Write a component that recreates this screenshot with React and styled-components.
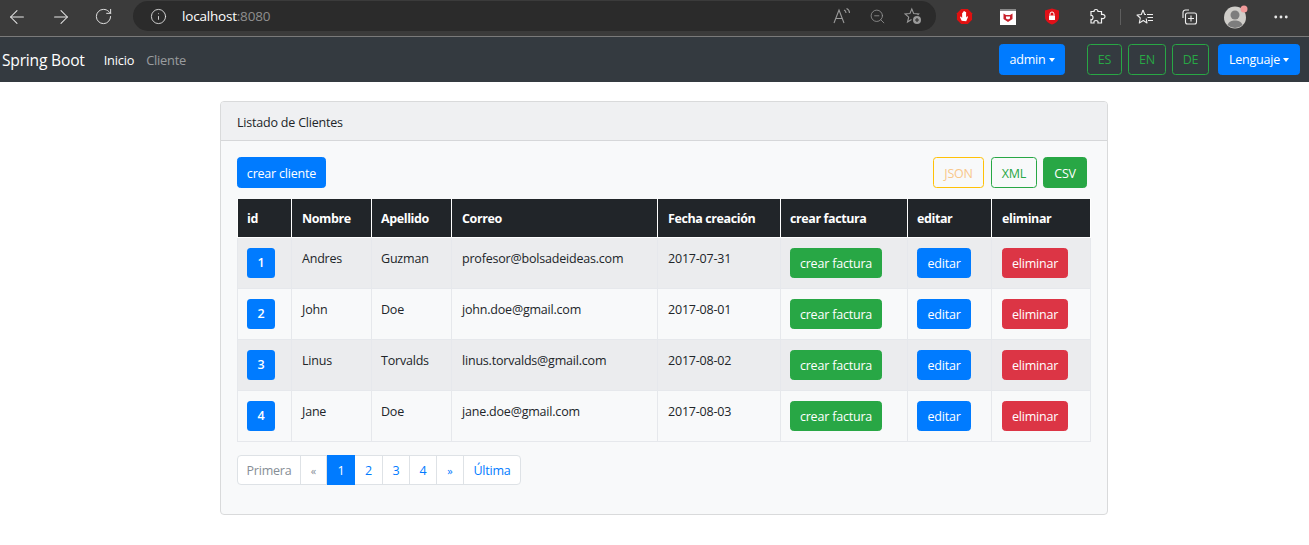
import React from 'react'
import styled, {createGlobalStyle} from 'styled-components'
import {ArrowLeft, ArrowRight, RotateCw, Info, ZoomOut, Ellipsis} from 'lucide-react'

const clientes = [
  {id: 1, nombre: 'Andres', apellido: 'Guzman', correo: 'profesor@bolsadeideas.com', fecha: '2017-07-31'},
  {id: 2, nombre: 'John', apellido: 'Doe', correo: 'john.doe@gmail.com', fecha: '2017-08-01'},
  {id: 3, nombre: 'Linus', apellido: 'Torvalds', correo: 'linus.torvalds@gmail.com', fecha: '2017-08-02'},
  {id: 4, nombre: 'Jane', apellido: 'Doe', correo: 'jane.doe@gmail.com', fecha: '2017-08-03'},
]

const columnas = [
  {titulo: 'id', ancho: 54, pad: 9},
  {titulo: 'Nombre', ancho: 80, pad: 10},
  {titulo: 'Apellido', ancho: 80, pad: 9},
  {titulo: 'Correo', ancho: 206, pad: 10},
  {titulo: 'Fecha creación', ancho: 123, pad: 10},
  {titulo: 'crear factura', ancho: 127, pad: 9},
  {titulo: 'editar', ancho: 84, pad: 9},
  {titulo: 'eliminar', ancho: 99, pad: 10},
]

const paginas = [
  {texto: 'Primera', ancho: 63, disabled: true},
  {texto: '«', ancho: 26, disabled: true, small: true},
  {texto: '1', ancho: 28, active: true},
  {texto: '2', ancho: 28},
  {texto: '3', ancho: 27},
  {texto: '4', ancho: 27},
  {texto: '»', ancho: 27, small: true},
  {texto: 'Última', ancho: 56},
]

const colores = {
  primary: '#007bff',
  success: '#28a745',
  danger: '#dc3545',
  warning: '#ffc107',
}

const GlobalStyle = createGlobalStyle`
  * { box-sizing: border-box; }
  body {
    margin: 0;
    background: #fff;
    color: #212529;
    font-family: "Open Sans", "Noto Sans", sans-serif;
    font-size: 12.5px;
    letter-spacing: -0.2px;
    overflow: hidden;
  }
`

const BrowserBar = styled.div`
  height: 37px;
  background: #3b3b3b;
  border-bottom: 1px solid #7a7a7a;
  display: flex;
  align-items: center;
  color: #e8e8e8;
`

const NavButtons = styled.div`
  display: flex;
  align-items: center;
  gap: 22px;
  padding: 0 0 3px 6px;
  width: 133px;
`

const UrlPill = styled.div`
  width: 803px;
  height: 30px;
  margin-top: -4px;
  border-radius: 15px;
  background: #2b2b2b;
  display: flex;
  align-items: center;
  padding: 0 14px 0 17px;
`

const UrlHost = styled.span`
  margin-left: 15px;
  color: #fff;
  font-size: 13.5px;
  font-weight: 500;
  letter-spacing: -0.2px;
`

const UrlPort = styled.span`
  color: #8f8f8f;
`

const UrlIcons = styled.div`
  margin-left: auto;
  display: flex;
  align-items: center;
  gap: 18px;
  color: #9a9a9a;
`

const Extensions = styled.div`
  flex: 1;
  display: flex;
  align-items: center;
  height: 100%;
  padding-bottom: 3px;
`

const ExtSlot = styled.div`
  width: ${(p) => p.$w}px;
  display: flex;
  justify-content: center;
  align-items: center;
`

const Divider = styled.div`
  width: 1px;
  height: 16px;
  margin-left: 6px;
  background: #5e5e5e;
`

const Navbar = styled.nav`
  height: 45px;
  background: #343a40;
  display: flex;
  align-items: center;
  padding: 0 9px 0 2px;
`

const Brand = styled.a`
  color: #fff;
  font-size: 15.6px;
  margin-right: 19px;
`

const NavLink = styled.a`
  color: ${(p) => (p.$active ? '#fff' : 'rgba(255,255,255,.5)')};
  font-size: 12.8px;
  margin-right: 12px;
`

const NavRight = styled.div`
  margin-left: auto;
  display: flex;
  align-items: center;
`

const Btn = styled.button`
  display: inline-flex;
  align-items: center;
  justify-content: center;
  vertical-align: top;
  width: ${(p) => p.$w}px;
  height: ${(p) => p.$h || 30}px;
  margin-left: ${(p) => p.$ml || 0}px;
  padding: 0;
  font-family: inherit;
  font-size: 12.5px;
  letter-spacing: inherit;
  border-radius: 3.5px;
  border: 1px solid ${(p) => colores[p.$tone]};
  background: ${(p) => (p.$outline ? 'transparent' : colores[p.$tone])};
  color: ${(p) => (p.$outline ? (p.$txt || colores[p.$tone]) : '#fff')};
`

const ToolbarBtn = styled(Btn)`
  padding-top: 2px;
`

const Caret = styled.span`
  margin-left: 3px;
  width: 0;
  height: 0;
  border-top: 4px solid currentColor;
  border-left: 3.5px solid transparent;
  border-right: 3.5px solid transparent;
`

const Page = styled.main`
  width: 888px;
  margin: 19px 0 0 220px;
`

const Card = styled.section`
  height: 414px;
  background: #f8f9fa;
  border: 1px solid #d9dadb;
  border-radius: 4px;
  overflow: hidden;
`

const CardHeader = styled.header`
  height: 39px;
  padding: 2px 16px 0;
  display: flex;
  align-items: center;
  background: #eff0f2;
  border-bottom: 1px solid #d6d7d9;
`

const CardBody = styled.div`
  padding: 16px 16px 0;
`

const Toolbar = styled.div`
  display: flex;
  align-items: center;
  height: 31px;
  margin-bottom: 10px;
`

const Exports = styled.div`
  margin-left: auto;
  padding-right: 4px;
  display: flex;
`

const Table = styled.table`
  width: 853px;
  table-layout: fixed;
  border-collapse: collapse;
`

const Th = styled.th`
  height: 39px;
  padding: 0 0 0 ${(p) => p.$pad}px;
  background: #212529;
  border: 1px solid #fff;
  border-top-color: #f8f9fa;
  color: #fff;
  font-size: 12.5px;
  font-weight: 700;
  letter-spacing: -0.4px;
  text-align: left;
`

const Row = styled.tr`
  background: ${(p) => (p.$odd ? '#ebecee' : 'transparent')};
`

const Td = styled.td`
  height: 51px;
  padding: 10px 0 10px ${(p) => p.$pad}px;
  border: 1px solid #e6e8ec;
  vertical-align: top;
  line-height: 22px;
`

const IdBadge = styled.a`
  display: flex;
  align-items: center;
  justify-content: center;
  width: 28px;
  height: 30px;
  background: #007bff;
  color: #fff;
  font-weight: 600;
  border-radius: 3.5px;
`

const Pagination = styled.ul`
  display: flex;
  list-style: none;
  margin: 13px 0 0;
  padding: 0;
  width: fit-content;
  border: 1px solid #dee2e6;
  border-radius: 4px;
  height: 30px;
  background: #fff;
`

const PageItem = styled.li`
  width: ${(p) => p.$w}px;
  margin: ${(p) => (p.$active ? '-1px 0' : '0')};
  display: flex;
  align-items: center;
  justify-content: center;
  font-size: ${(p) => (p.$small ? 11 : 12.5)}px;
  background: ${(p) => (p.$active ? '#007bff' : 'transparent')};
  color: ${(p) => (p.$active ? '#fff' : p.$disabled ? '#868e96' : '#007bff')};
  border-right: ${(p) => (p.$last || p.$active ? '0' : '1px solid #dee2e6')};
`

const ExtHand = () => (
  <svg width="17" height="17" viewBox="0 0 18 18">
    <path d="M5.500 1h7L17 5.500v7L12.500 17h-7L1 12.500v-7z" fill="#e01010" />
    <path d="M6 13.500 4.200 9.500l1-.6L6.500 10.500V5h1v3.500V3.800h1.100V8.500V3.500h1.100v5V4.300h1V10l1.100-1.200 1 .5-2 4.700z" fill="#fff" />
  </svg>
)

const ExtMcafee = () => (
  <svg width="16" height="16" viewBox="0 0 16 16">
    <rect width="16" height="16" fill="#fff" />
    <rect width="16" height="2" fill="#8a8a8a" />
    <path d="M3.500 4.500 6 6h4l2.500-1.500v5.500L8 13 3.500 10z" fill="#c8202b" />
    <path d="M6 7.500h4v2L8 10.500l-2-1z" fill="#fff" />
  </svg>
)

const ExtShield = () => (
  <svg width="16" height="17" viewBox="0 0 16 17">
    <path d="M8 .5 15 2.500V9c0 3.500-3 6-7 7.500C4 15 1 12.500 1 9V2.500z" fill="#e01018" />
    <rect x="5" y="7.500" width="6" height="4.500" rx=".5" fill="#fff" />
    <path d="M6 7.500V6a2 2 0 0 1 4 0v1.500" fill="none" stroke="#fff" strokeWidth="1" />
  </svg>
)

const ExtPuzzle = () => (
  <svg width="17" height="17" viewBox="0 0 17 17" fill="none" stroke="#f2f2f2" strokeWidth="1.200">
    <path d="M7 1.500c1.500 0 2 1 2 2h3.500v3c1.200-.4 3.500 0 3.500 2s-2.300 2.500-3.500 2V15H9c.3-1.500-.4-2.500-2-2.500s-2.300 1-2 2.500H2v-3.500c1 .3 2-.4 2-2s-1-2.300-2-2V3.500h3c0-1 .5-2 2-2z" />
  </svg>
)

const Favoritos = () => (
  <svg width="18" height="18" viewBox="0 0 18 18" fill="none" stroke="#eee" strokeWidth="1.100">
    <path d="M7 2 5.300 6.500 1 7l3.300 3L3.300 15l4-2.500 3.700 2.500-.8-4.500" strokeLinejoin="round" />
    <path d="M7 2l1.700 4.500H10" />
    <path d="M11 6.500h6M11.500 9.500h5.500M12 12.500h5" />
  </svg>
)

const Colecciones = () => (
  <svg width="18" height="18" viewBox="0 0 18 18" fill="none" stroke="#eee" strokeWidth="1.100">
    <path d="M3 10V4.500A2.500 2.500 0 0 1 5.500 2H9" />
    <rect x="5.500" y="5" width="11" height="11" rx="2" />
    <path d="M11 7.500v6M8 10.500h6" />
  </svg>
)

const Perfil = () => (
  <svg width="24" height="24" viewBox="0 0 24 24">
    <circle cx="11" cy="12.500" r="11" fill="#cfcdc9" />
    <circle cx="11" cy="10" r="4.500" fill="#7d7d7d" />
    <path d="M3.500 20c1.500-3.500 4-4.500 7.500-4.500s6 1 7.500 4.500a11 11 0 0 1-15 0z" fill="#7d7d7d" />
    <circle cx="20" cy="4" r="3.500" fill="#f19a9a" />
  </svg>
)

const FavPlus = () => (
  <svg width="18" height="18" viewBox="0 0 18 18" fill="none" stroke="#9a9a9a" strokeWidth="1.100">
    <path d="M7.500 12.500 3.500 15l1.200-4.800L1 7l4.900-.4L7.800 2l1.900 4.600 4.900.4-1 1" />
    <circle cx="13" cy="13" r="4" fill="#9a9a9a" stroke="none" />
    <path d="M13 11v4M11 13h4" stroke="#2b2b2b" />
  </svg>
)

const ReadAloud = () => (
  <svg width="18" height="16" viewBox="0 0 18 16" fill="none" stroke="#9a9a9a" strokeWidth="1.100">
    <path d="M1 15 6 2l5 13M3 10.500h6" />
    <path d="M11 2c1.500.5 2 1.500 2 3M13.500.5c1.800.8 3 2.500 3 4.500" />
  </svg>
)

const App = () => {
  return (
    <>
      <GlobalStyle />
      <BrowserBar>
        <NavButtons>
          <ArrowLeft size={22} strokeWidth={1.100} />
          <ArrowRight size={22} strokeWidth={1.100} />
          <RotateCw size={19} strokeWidth={1.200} />
        </NavButtons>
        <UrlPill>
          <Info size={17} strokeWidth={1.200} color="#e8e8e8" />
          <UrlHost>localhost<UrlPort>:8080</UrlPort></UrlHost>
          <UrlIcons>
            <ReadAloud />
            <ZoomOut size={17} strokeWidth={1.100} />
            <FavPlus />
          </UrlIcons>
        </UrlPill>
        <Extensions>
          <ExtSlot $w={56}><ExtHand /></ExtSlot>
          <ExtSlot $w={32}><ExtMcafee /></ExtSlot>
          <ExtSlot $w={56}><ExtShield /></ExtSlot>
          <ExtSlot $w={34}><ExtPuzzle /></ExtSlot>
          <Divider />
          <ExtSlot $w={48}><Favoritos /></ExtSlot>
          <ExtSlot $w={40}><Colecciones /></ExtSlot>
          <ExtSlot $w={54}><Perfil /></ExtSlot>
          <ExtSlot $w={36}><Ellipsis size={18} strokeWidth={1.800} /></ExtSlot>
        </Extensions>
      </BrowserBar>

      <Navbar>
        <Brand>Spring Boot</Brand>
        <NavLink $active>Inicio</NavLink>
        <NavLink>Cliente</NavLink>
        <NavRight>
          <Btn $tone="primary" $w={66} $h={31}>admin<Caret /></Btn>
          <Btn $tone="success" $outline $w={35} $h={31} $ml={22}>ES</Btn>
          <Btn $tone="success" $outline $w={38} $h={31} $ml={6}>EN</Btn>
          <Btn $tone="success" $outline $w={37} $h={31} $ml={6}>DE</Btn>
          <Btn $tone="primary" $w={82} $h={31} $ml={9}>Lenguaje<Caret /></Btn>
        </NavRight>
      </Navbar>

      <Page>
        <Card>
          <CardHeader>Listado de Clientes</CardHeader>
          <CardBody>
            <Toolbar>
              <ToolbarBtn $tone="primary" $w={89} $h={31}>crear cliente</ToolbarBtn>
              <Exports>
                <ToolbarBtn $tone="warning" $outline $txt="#f9c78a" $w={51} $h={31}>JSON</ToolbarBtn>
                <ToolbarBtn $tone="success" $outline $w={46} $h={31} $ml={7}>XML</ToolbarBtn>
                <ToolbarBtn $tone="success" $w={44} $h={31} $ml={6}>CSV</ToolbarBtn>
              </Exports>
            </Toolbar>
            <Table>
              <colgroup>
                {columnas.map((col) => <col key={col.titulo} style={{width: col.ancho}} />)}
              </colgroup>
              <thead>
                <tr>
                  {columnas.map((col) => <Th key={col.titulo} $pad={col.pad}>{col.titulo}</Th>)}
                </tr>
              </thead>
              <tbody>
                {clientes.map((cliente, i) => (
                  <Row key={cliente.id} $odd={i % 2 === 0}>
                    <Td $pad={columnas[0].pad}><IdBadge>{cliente.id}</IdBadge></Td>
                    <Td $pad={columnas[1].pad}>{cliente.nombre}</Td>
                    <Td $pad={columnas[2].pad}>{cliente.apellido}</Td>
                    <Td $pad={columnas[3].pad}>{cliente.correo}</Td>
                    <Td $pad={columnas[4].pad}>{cliente.fecha}</Td>
                    <Td $pad={columnas[5].pad}><Btn $tone="success" $w={92}>crear factura</Btn></Td>
                    <Td $pad={columnas[6].pad}><Btn $tone="primary" $w={54}>editar</Btn></Td>
                    <Td $pad={columnas[7].pad}><Btn $tone="danger" $w={66}>eliminar</Btn></Td>
                  </Row>
                ))}
              </tbody>
            </Table>
            <Pagination>
              {paginas.map((p, i) => (
                <PageItem
                  key={p.texto}
                  $w={p.ancho}
                  $active={p.active}
                  $disabled={p.disabled}
                  $small={p.small}
                  $last={i === paginas.length - 1}
                >
                  {p.texto}
                </PageItem>
              ))}
            </Pagination>
          </CardBody>
        </Card>
      </Page>
    </>
  )
}

export default App
